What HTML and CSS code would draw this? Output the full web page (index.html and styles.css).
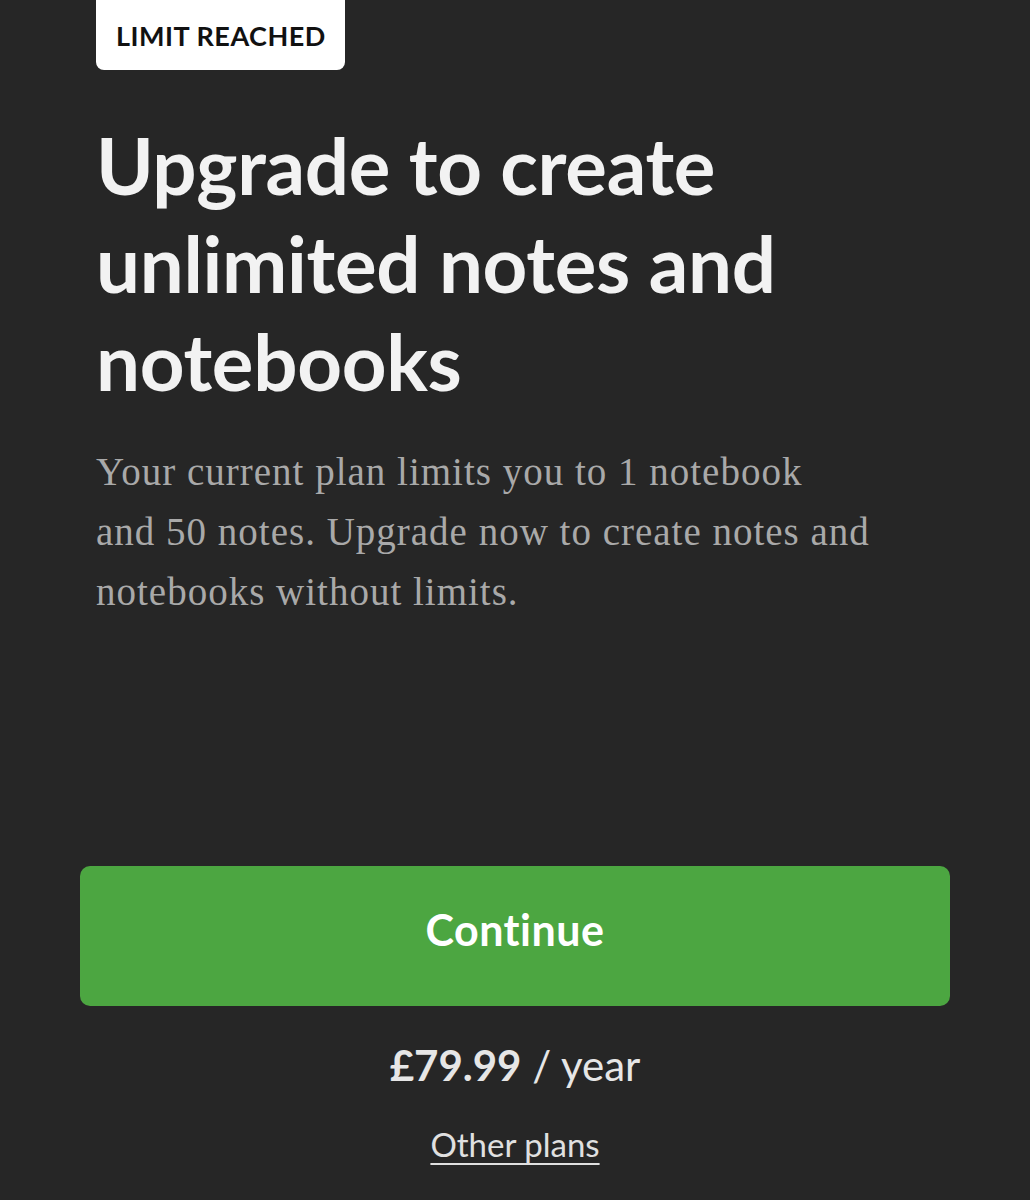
FILE: index.html
```html
<!DOCTYPE html>
<html lang="en">

<head>
    <meta charset="UTF-8">
    <meta name="viewport" content="width=device-width, initial-scale=1.0">
    <title>Upgrade</title>
    <link rel="stylesheet" href="styles.css">
</head>

<body>
    <div class="paywall">
        <div class="intro">
            <span class="badge">LIMIT REACHED</span>
            <h1>Upgrade to create unlimited notes and notebooks</h1>
            <p class="lead">Your current plan limits you to 1 notebook<br>
                and 50 notes. Upgrade now to create notes and notebooks without limits.</p>
        </div>
        <div class="actions">
            <button type="button" class="continue">Continue</button>
            <div class="price"><strong>£79.99</strong> / year</div>
            <a href="#" class="other-plans">Other plans</a>
        </div>
    </div>
</body>

</html>
```

FILE: styles.css
```css
body {
    margin: 0;
    background-color: #262626;
    font-family: 'Lato', sans-serif;
    color: #f2f2f2;
}

.paywall {
    display: flex;
    flex-direction: column;
    padding: 0 80px;
    height: 1200px;
    box-sizing: border-box;
}

.intro {
    padding-left: 16px;
    display: flex;
    flex-direction: column;
    align-items: flex-start;
}

.badge {
    display: inline-block;
    background-color: #fff;
    color: #111;
    font-weight: 700;
    font-size: 27px;
    letter-spacing: 0.5px;
    padding: 19px 19px 18px 20px;
    border-radius: 0 0 8px 8px;
    line-height: 33px;
}

h1 {
    font-size: 78px;
    font-weight: 700;
    line-height: 98px;
    margin: 46px 0 0;
    max-width: 800px;
    letter-spacing: -0.3px;
    color: #f2f2f2;
}

.lead {
    font-family: 'Liberation Serif', serif;
    font-size: 39px;
    letter-spacing: 1px;
    line-height: 60px;
    color: #a9a9a9;
    margin: 32px 0 0;
    max-width: 820px;
}

.actions {
    margin-top: auto;
    display: flex;
    flex-direction: column;
    align-items: center;
    padding-bottom: 36px;
}

.continue {
    width: 100%;
    height: 140px;
    padding: 0 0 14px;
    background-color: #4ca641;
    color: #fff;
    border: none;
    border-radius: 10px;
    font-family: 'Lato', sans-serif;
    font-weight: 700;
    font-size: 43px;
    letter-spacing: 0.5px;
    cursor: pointer;
}

.price {
    margin-top: 34px;
    font-size: 42px;
    color: #e6e6e6;
}

.other-plans {
    margin-top: 34px;
    font-size: 33px;
    color: #e0e0e0;
    text-decoration: underline;
    text-underline-offset: 6px;
    text-decoration-thickness: 2px;
}
```
